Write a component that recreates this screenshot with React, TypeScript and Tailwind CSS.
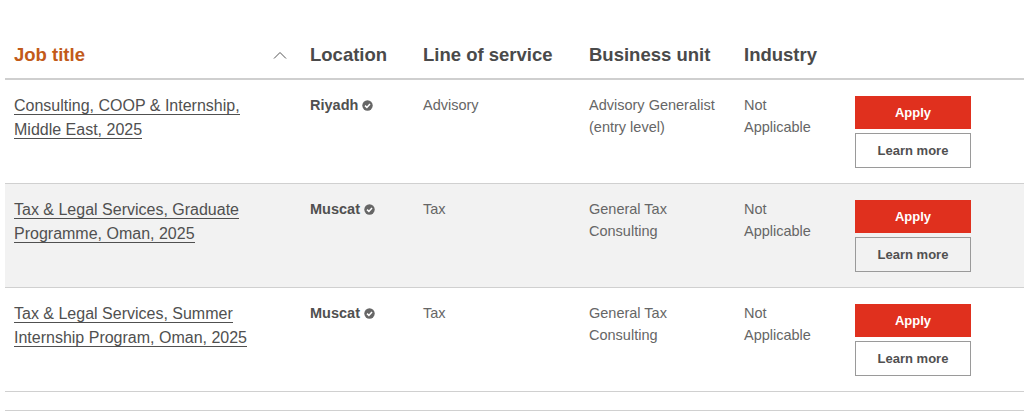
import React from "react";

interface Job {
  title: string[];
  location: string;
  service: string;
  unit: string[];
  shaded?: boolean;
}

const jobs: Job[] = [
  {
    title: ["Consulting, COOP & Internship,", "Middle East, 2025"],
    location: "Riyadh",
    service: "Advisory",
    unit: ["Advisory Generalist", "(entry level)"],
  },
  {
    title: ["Tax & Legal Services, Graduate", "Programme, Oman, 2025"],
    location: "Muscat",
    service: "Tax",
    unit: ["General Tax", "Consulting"],
    shaded: true,
  },
  {
    title: ["Tax & Legal Services, Summer", "Internship Program, Oman, 2025"],
    location: "Muscat",
    service: "Tax",
    unit: ["General Tax", "Consulting"],
  },
];

const cols = "grid grid-cols-[296px_113px_166px_155px_111px_116px] pl-[9px]";

function CheckBadge() {
  return (
    <svg width="11" height="11" viewBox="0 0 11 11" className="ml-[4px] shrink-0">
      <circle cx="5.5" cy="5.5" r="5.2" fill="#666666" />
      <path d="M3 5.6 L4.9 7.4 L8 3.9" fill="none" stroke="#fff" strokeWidth="1.5" />
    </svg>
  );
}

function JobRow({ job }: { job: Job }) {
  return (
    <div className={`${cols} h-[104px] border-b border-[#d0d0d0] pt-[11px] ${job.shaded ? "bg-[#f2f2f2]" : "bg-white"}`}>
      <div className="flex flex-col items-start text-[16px] text-[#505050]">
        {job.title.map((line) => (
          <span key={line} className="h-[24px] pt-[6px] leading-[17px] border-b border-[#505050] whitespace-nowrap">
            {line}
          </span>
        ))}
      </div>
      <div className="flex items-center h-[24px] mt-[2px] self-start text-[14.5px] font-bold text-[#505050] leading-[22px]">
        {job.location}
        <CheckBadge />
      </div>
      <div className="mt-[3px] text-[14.5px] leading-[22px] text-[#666666]">{job.service}</div>
      <div className="mt-[3px] text-[14.5px] leading-[22px] text-[#666666]">
        {job.unit.map((line) => (
          <div key={line}>{line}</div>
        ))}
      </div>
      <div className="mt-[3px] text-[14.5px] leading-[22px] text-[#666666]">
        <div>Not</div>
        <div>Applicable</div>
      </div>
      <div className="flex flex-col gap-[4px] mt-[5px]">
        <button className="h-[33px] bg-[#e0301e] text-white text-[13px] font-bold">Apply</button>
        <button className="h-[35px] border border-[#9a9a9a] text-[#505050] text-[13px] font-bold">Learn more</button>
      </div>
    </div>
  );
}

export default function App() {
  return (
    <div className="w-[1024px] h-[411px] overflow-hidden bg-white font-['Liberation_Sans',Arial,sans-serif]">
      <div className="pt-[41px] ml-[5px]">
        <div className={`${cols} h-[39px] border-b-2 border-[#cfcfcf] text-[18.5px] font-bold leading-[28px] text-[#4a4a4a]`}>
          <div className="flex items-start justify-between pr-[23px] text-[#c25a1a]">
            <span>Job title</span>
            <svg width="14" height="8" viewBox="0 0 14 8" className="mt-[10px]">
              <path d="M1 7.5 L7 1.5 L13 7.5" fill="none" stroke="#555555" strokeWidth="1" />
            </svg>
          </div>
          <div>Location</div>
          <div>Line of service</div>
          <div>Business unit</div>
          <div>Industry</div>
          <div />
        </div>
        {jobs.map((job) => (
          <JobRow key={job.title[0]} job={job} />
        ))}
        <div className="h-[19px] border-b border-[#d0d0d0]" />
      </div>
    </div>
  );
}
